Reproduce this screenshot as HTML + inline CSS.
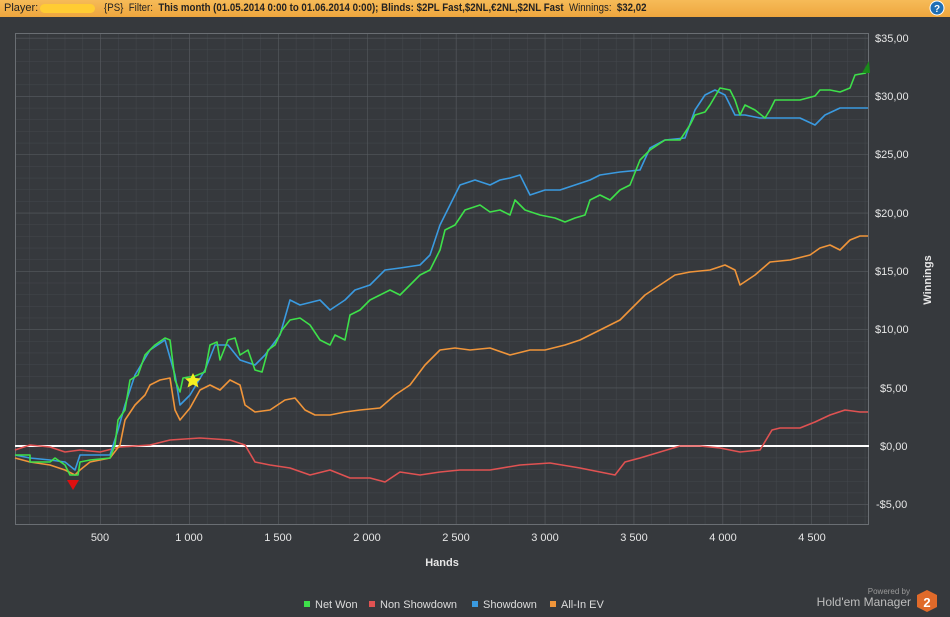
<!DOCTYPE html>
<html><head><meta charset="utf-8"><style>
body{margin:0;width:950px;height:617px;background:#36393d;font-family:"Liberation Sans",sans-serif;overflow:hidden;position:relative}
.hdr{position:absolute;left:0;top:0;width:950px;height:17px;background:linear-gradient(#f6bb58,#eea63e);font-size:11px;color:#222;line-height:17px;white-space:nowrap}
.hdr span{position:absolute;top:0}
svg{position:absolute;left:0;top:0}
</style></head><body>
<div class="hdr"><span style="left:4px">Player:</span><span style="left:40px;top:4px;width:55px;height:9px;background:#ffcc33;border-radius:5px"></span><span style="left:104px;transform:scaleX(0.88);transform-origin:0 0">{PS}&nbsp; Filter:&nbsp; <b>This month (01.05.2014 0:00 to 01.06.2014 0:00); Blinds: $2PL Fast,$2NL,€2NL,$2NL Fast</b>&nbsp; Winnings:&nbsp; <b>$32,02</b></span></div>
<svg width="950" height="617" viewBox="0 0 950 617">
<defs>
<pattern id="mi" patternUnits="userSpaceOnUse" x="11.4" y="446" width="17.78" height="11.66"><path d="M0 0V11.66M0 0H17.78" stroke="#44484d" stroke-width="1" fill="none"/></pattern>
<pattern id="ma" patternUnits="userSpaceOnUse" x="11.4" y="446" width="88.9" height="58.3"><path d="M0 0V58.3M0 0H88.9" stroke="#5a5e63" stroke-width="1" fill="none"/></pattern>
</defs>
<circle cx="937" cy="8" r="7" fill="#1f6fb5" stroke="#fff" stroke-width="1"/><text x="937" y="12" font-size="10" fill="#fff" text-anchor="middle" font-weight="bold">?</text>
<rect x="15" y="33" width="854" height="492" fill="url(#mi)"/>
<rect x="15" y="33" width="854" height="492" fill="url(#ma)"/>
<rect x="15.5" y="33.5" width="853" height="491" fill="none" stroke="#6a6e73"/>
<g font-size="11" fill="#e6e6e6">
<text x="875" y="42">$35,00</text><text x="875" y="100">$30,00</text><text x="875" y="158">$25,00</text><text x="875" y="217">$20,00</text><text x="875" y="275">$15,00</text><text x="875" y="333">$10,00</text><text x="880" y="392">$5,00</text><text x="880" y="450">$0,00</text><text x="876" y="508">-$5,00</text>
<g text-anchor="middle"><text x="100" y="541">500</text><text x="189" y="541">1 000</text><text x="278" y="541">1 500</text><text x="367" y="541">2 000</text><text x="456" y="541">2 500</text><text x="545" y="541">3 000</text><text x="634" y="541">3 500</text><text x="723" y="541">4 000</text><text x="812" y="541">4 500</text></g>
<text x="442" y="566" text-anchor="middle" font-weight="bold">Hands</text>
<text transform="translate(931,280) rotate(-90)" text-anchor="middle" font-weight="bold">Winnings</text>
</g>
<line x1="15" y1="446" x2="869" y2="446" stroke="#fff" stroke-width="2"/>
<g fill="none" stroke-width="1.6" stroke-linejoin="round">
<polyline stroke="#e05252" points="15,450 30,445 50,447 65,452 80,450 100,452 120,447 150,445 170,440 200,438 230,440 245,445 255,462 270,465 290,468 310,475 330,470 350,478 370,478 385,482 400,472 420,475 440,472 460,470 490,470 520,465 550,463 580,468 600,472 615,475 625,462 640,458 660,452 680,446 700,446 720,448 740,452 760,450 772,430 780,428 800,428 815,422 830,415 845,410 860,412 868,412"/>
<polyline stroke="#f0953a" points="15,458 30,462 50,465 65,470 75,475 80,470 90,462 110,458 120,445 125,420 135,405 145,395 150,385 160,380 170,378 175,410 180,420 190,408 200,390 210,385 220,390 230,380 240,385 245,405 255,412 270,410 285,400 295,398 305,410 315,415 330,415 345,412 360,410 380,408 395,395 410,385 425,365 440,350 455,348 470,350 490,348 510,355 530,350 545,350 565,345 580,340 600,330 610,325 620,320 635,305 645,295 660,285 675,275 690,272 710,270 725,265 735,270 740,285 755,275 770,262 790,260 810,255 820,248 830,245 840,250 850,240 860,236 868,236"/>
<polyline stroke="#3a9ae0" points="15,455 30,458 50,460 65,462 75,470 80,455 110,455 118,430 125,405 135,375 150,350 165,340 175,375 180,405 190,395 205,370 215,345 228,345 240,360 255,365 265,355 280,335 290,300 300,305 320,300 330,310 345,300 355,290 370,285 385,270 400,268 420,265 430,255 440,225 450,205 460,185 475,180 490,185 500,180 510,178 520,175 530,195 545,190 560,190 575,185 590,180 600,175 620,172 640,170 650,148 665,140 685,138 695,110 705,95 715,90 725,95 735,115 745,115 760,118 775,118 800,118 815,125 825,115 840,108 855,108 868,108"/>
<polyline stroke="#3ee04a" points="15,455 30,455 30,462 50,462 55,458 65,465 70,475 78,475 80,462 90,460 110,458 115,445 118,420 125,410 130,380 138,375 145,355 155,345 165,338 170,340 175,380 180,392 183,378 195,376 205,372 210,345 217,342 220,360 228,340 235,338 240,355 248,350 255,370 262,372 268,350 275,345 282,330 290,320 300,318 310,325 320,340 330,345 335,335 345,340 350,315 360,310 370,300 380,295 390,290 400,295 410,285 420,275 430,270 440,250 445,230 455,225 465,210 480,205 490,212 500,210 510,215 515,200 525,210 540,215 555,218 565,222 575,218 585,215 590,200 600,195 610,200 620,190 630,185 640,160 650,150 665,140 680,140 690,125 695,115 705,112 710,105 720,88 730,90 735,100 740,115 745,105 755,110 765,118 770,110 775,100 790,100 800,100 815,96 820,90 830,90 840,92 850,88 855,75 866,73"/>
</g>
<polygon points="67,480 79,480 73,490" fill="#e01010"/>
<polygon points="193,373 195.5,378 201,378.5 197,382 198.5,387.5 193,384.5 187.5,387.5 189,382 185,378.5 190.5,378" fill="#f5f020"/>
<polygon points="862,73 870,73 869,61" fill="#1a8a1a"/>
<g font-size="11" fill="#dcdcdc">
<rect x="304" y="601" width="6" height="6" fill="#3ee04a"/><text x="315" y="608">Net Won</text>
<rect x="369" y="601" width="6" height="6" fill="#e05252"/><text x="380" y="608">Non Showdown</text>
<rect x="472" y="601" width="6" height="6" fill="#3a9ae0"/><text x="483" y="608">Showdown</text>
<rect x="550" y="601" width="6" height="6" fill="#f0953a"/><text x="561" y="608">All-In EV</text>
</g>
<text x="910" y="594" font-size="8" fill="#9a9a9a" text-anchor="end">Powered by</text>
<text x="911" y="606" font-size="12" fill="#bdbdbd" text-anchor="end">Hold'em Manager</text>
<polygon points="927,590 937,595 937,607 927,612 917,607 917,595" fill="#e06a2a"/>
<text x="927" y="607" font-size="13" font-weight="bold" fill="#fff" text-anchor="middle">2</text>
</svg>
</body></html>
